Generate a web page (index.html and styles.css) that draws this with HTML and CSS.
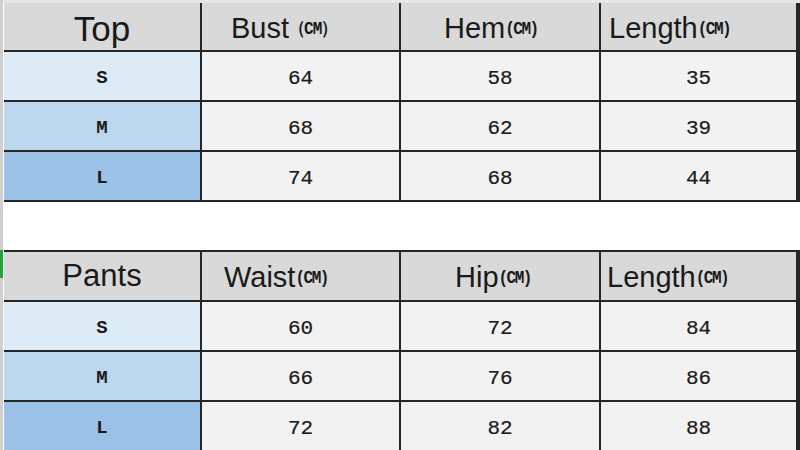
FILE: index.html
```html
<!DOCTYPE html>
<html>
<head>
<meta charset="utf-8">
<link rel="stylesheet" href="styles.css">
</head>
<body>
<div class="sheet">
  <div class="topstrip"></div>
  <div class="grid top">
    <div class="cell head first"><span class="big">Top</span></div>
    <div class="cell head pl-bust"><span class="hd">Bust</span><span class="cm wide">（CM）</span></div>
    <div class="cell head pl-hem"><span class="hd">Hem</span><span class="cm">(CM)</span></div>
    <div class="cell head pl-len"><span class="hd">Length</span><span class="cm">(CM)</span></div>

    <div class="cell size s">S</div><div class="cell val">64</div><div class="cell val">58</div><div class="cell val">35</div>
    <div class="cell size m">M</div><div class="cell val">68</div><div class="cell val">62</div><div class="cell val">39</div>
    <div class="cell size l">L</div><div class="cell val">74</div><div class="cell val">68</div><div class="cell val">44</div>
  </div>
  <div class="gap"></div>
  <div class="grid pants">
    <div class="cell head first"><span class="mid">Pants</span></div>
    <div class="cell head pl-waist"><span class="hd">Waist</span><span class="cm">(CM)</span></div>
    <div class="cell head pl-hip"><span class="hd">Hip</span><span class="cm">(CM)</span></div>
    <div class="cell head pl-len2"><span class="hd">Length</span><span class="cm">(CM)</span></div>

    <div class="cell size s">S</div><div class="cell val">60</div><div class="cell val">72</div><div class="cell val">84</div>
    <div class="cell size m">M</div><div class="cell val">66</div><div class="cell val">76</div><div class="cell val">86</div>
    <div class="cell size l">L</div><div class="cell val">72</div><div class="cell val">82</div><div class="cell val">88</div>
  </div>
  <div class="marker"></div>
</div>
</body>
</html>
```

FILE: styles.css
```css
* { box-sizing: border-box; }
html, body { margin: 0; padding: 0; background: #fff; }
body { width: 800px; height: 450px; overflow: hidden; }

.sheet {
  position: relative;
  width: 800px;
  height: 450px;
  border-left: 3px solid #cfcfcf;
  padding-left: 1px;
  background: #fff;
}

.topstrip {
  height: 3px;
  background: #e6e6e6;
  margin-left: -1px;
}

.grid {
  display: grid;
  grid-template-columns: 196px 197px 198px 195px;
  column-gap: 2px;
  row-gap: 2px;
  background: #262626;
  width: 796px;
  border-right: 2px solid #262626;
}
.grid.top {
  grid-template-rows: 47px 48px 48px 48px;
  border-bottom: 2px solid #262626;
}
.grid.pants {
  grid-template-rows: 48px 48px 48px 48px;
  border-top: 2px solid #262626;
}

.gap { height: 48px; }

.cell {
  display: flex;
  align-items: center;
  justify-content: center;
  background: #f2f2f2;
  color: #1a1a1a;
}

.head {
  background: #d9d9d9;
  justify-content: flex-start;
  align-items: baseline;
  font-family: "Liberation Sans", Arial, sans-serif;
  white-space: nowrap;
  padding-top: 9px;
}
.head.first { justify-content: center; padding-top: 6px; }

.big { font-size: 35px; }
.mid { font-size: 31px; }
.hd { font-size: 29px; }

.cm {
  font-family: "Liberation Mono", "Courier New", monospace;
  font-weight: bold;
  font-size: 16px;
  letter-spacing: -1.5px;
  position: relative;
  top: -4px;
  transform: scaleY(1.1);
  display: inline-block;
}
.cm.wide { letter-spacing: -1px; }

.pl-bust { padding-left: 29px; }
.pl-hem { padding-left: 43px; }
.pl-len { padding-left: 8px; }
.pl-waist { padding-left: 22px; }
.pl-hip { padding-left: 54px; }
.pl-len2 { padding-left: 6px; }

.val, .size {
  font-family: "Liberation Mono", "Courier New", monospace;
  font-size: 21px;
  -webkit-text-stroke: 0.2px #1a1a1a;
  padding-top: 4px;
}
.size { font-weight: bold; font-size: 19px; -webkit-text-stroke: 0; }
.size.s { background: #ddebf7; }
.size.m { background: #bdd7ee; }
.size.l { background: #9bc2e6; }

.marker {
  position: absolute;
  left: -3px;
  top: 250px;
  width: 3px;
  height: 28px;
  background: #21a336;
}
```
